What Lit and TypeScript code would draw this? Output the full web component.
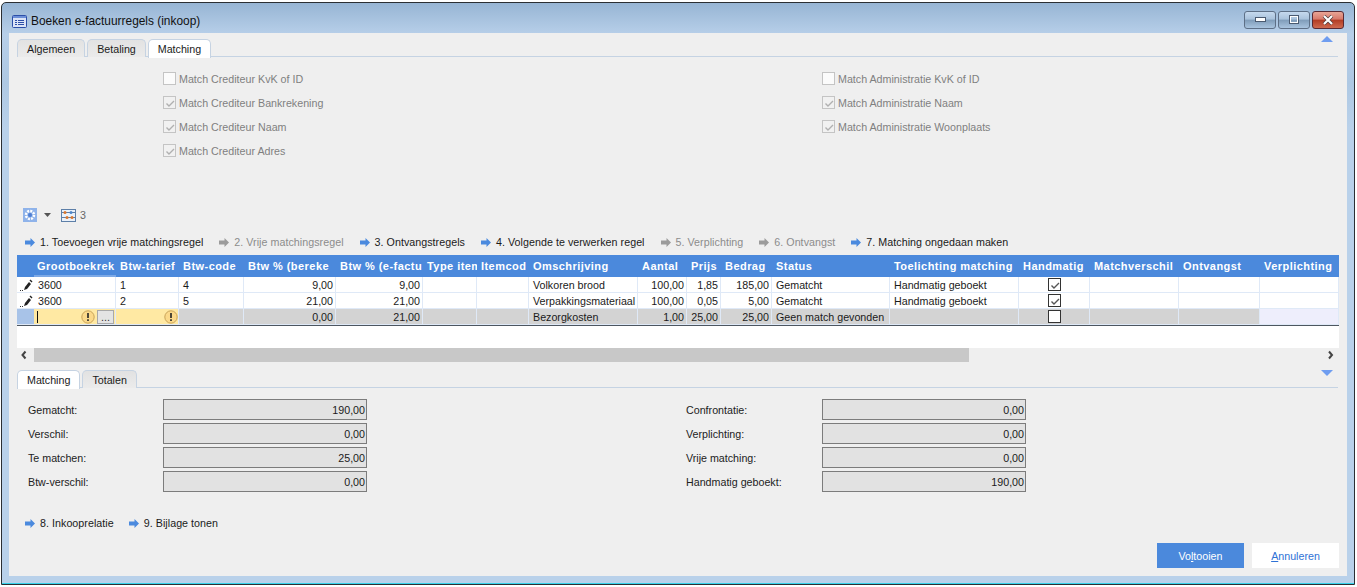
import { LitElement, css, html, svg } from 'lit'
import { customElement } from 'lit/decorators.js'

const arrow = (muted = false) => html`<svg class="arrow" width="10" height="9" viewBox="0 0 10 9">
	<path d="M0 2.500h5.500V0L10 4.500 5.500 9V6.500H0z" fill=${muted ? '#9b9b9b' : '#4b8ade'}></path>
</svg>`

const warn = html`<svg class="warn" width="14" height="14" viewBox="0 0 14 14">
	<circle cx="7" cy="7" r="6.200" fill="#fbd98a" stroke="#c9a45a"></circle>
	<path d="M6.200 3h1.600v5H6.200zM6.200 9.300h1.600V11H6.200z" fill="#222"></path>
</svg>`

const pencil = html`<svg class="pencil" width="14" height="12" viewBox="0 0 14 12">
	<path d="M1 11h1v1H1zM3 11h1v1H3z" fill="#333"></path>
	<path d="M5 11l1-3 4-5 2 2-4 5z" fill="#222"></path>
	<path d="M10.500 1.500l1-1 2 2-1 1z" fill="#222"></path>
</svg>`

const tick = svg`<path d="M2.500 6.500l2.500 2.500 5-5" fill="none" stroke="currentColor" stroke-width="1.400"></path>`

// labels as far as they fit in the column
const columns = [
	'Grootboekrek',
	'Btw-tarief',
	'Btw-code',
	'Btw % (bereke',
	'Btw % (e-factu',
	'Type item',
	'Itemcod',
	'Omschrijving',
	'Aantal',
	'Prijs',
	'Bedrag',
	'Status',
	'Toelichting matching',
	'Handmatig',
	'Matchverschil',
	'Ontvangst',
	'Verplichting',
]

const rows = [
	['3600', '1', '4', '9,00', '9,00', '', '', 'Volkoren brood', '100,00', '1,85', '185,00', 'Gematcht', 'Handmatig geboekt', 'x', '', '', ''],
	['3600', '2', '5', '21,00', '21,00', '', '', 'Verpakkingsmateriaal', '100,00', '0,05', '5,00', 'Gematcht', 'Handmatig geboekt', 'x', '', '', ''],
]
const lastRow = ['', '', '', '0,00', '21,00', '', '', 'Bezorgkosten', '1,00', '25,00', '25,00', 'Geen match gevonden', '', '', '', '', '']

const rightCols = new Set([3, 4, 8, 9, 10])

@customElement('app-root')
export class AppRoot extends LitElement {
	static styles = css`
		:host {
			display: block;
			width: 1357px;
			height: 587px;
			background: #fff;
			font-family: 'Liberation Sans', Arial, sans-serif;
			font-size: 10.7px;
			color: #1a1a1a;
			overflow: hidden;
			padding: 2px 2px 2px 1px;
			box-sizing: border-box;
		}
		* {
			box-sizing: border-box;
		}
		.window {
			height: 583px;
			display: flex;
			flex-direction: column;
			border: 1px solid #2b2f33;
			border-radius: 5px 5px 0 0;
			background: linear-gradient(#97b5d4 0, #b7cfe9 31px, #aec8e3 80px, #b9d1ea 125px, #b9d1ea 100%);
			padding: 0 7px 8px 7px;
			box-shadow: inset 0 -1px 0 #35d3ea;
		}
		.titlebar {
			height: 30px;
			flex: none;
			display: flex;
			align-items: center;
			gap: 4px;
			padding: 6px 0 0 3px;
			font-size: 11.9px;
			color: #111;
		}
		.title {
			flex: 1;
		}
		.caption {
			display: flex;
			gap: 2px;
			margin: -3px 3px 0 0;
		}
		.cap {
			width: 32px;
			height: 18px;
			border: 1px solid #5d6f86;
			border-radius: 3px;
			display: flex;
			align-items: center;
			justify-content: center;
			background: linear-gradient(#c5d9ee 0, #a9c2dc 45%, #7f9cb9 50%, #a9c4df 100%);
		}
		.cap.close {
			border-color: #5a2a33;
			background: linear-gradient(#e8a596 0, #d8796a 45%, #b23c24 50%, #cf6a50 100%);
		}
		.content {
			flex: 1;
			min-height: 0;
			background: #efefef;
			display: flex;
			flex-direction: column;
			padding: 6px 8px 8px 8px;
			position: relative;
		}
		.tabs {
			display: flex;
			height: 18px;
			flex: none;
			gap: 2px;
			border-bottom: 1px solid #c5d3e3;
			margin-right: 1px;
			position: relative;
		}
		.tab {
			height: 18px;
			padding: 0 9px;
			display: flex;
			align-items: center;
			justify-content: center;
			border: 1px solid #c6d3e2;
			border-bottom: none;
			border-radius: 5px 5px 0 0;
			background: linear-gradient(#e2e2e2, #ebebeb);
		}
		.tab.active {
			background: #fff;
			height: 19px;
		}
		.collapse {
			position: absolute;
			right: 5px;
			top: -3px;
		}
		.collapse.down {
			top: 0;
		}
		.matches {
			height: 149px;
			flex: none;
			display: flex;
			padding: 15px 0 0 146px;
		}
		.match-col {
			width: 659px;
			flex: none;
			display: flex;
			flex-direction: column;
			gap: 11px;
		}
		.match {
			height: 13px;
			display: flex;
			align-items: center;
			gap: 3px;
			color: #7f7f7f;
		}
		.box {
			width: 13px;
			height: 13px;
			border: 1px solid #c4c4c4;
			background: #f1f1f1;
			color: #b0b0b0;
			display: block;
			flex: none;
		}
		.box.plain {
			background: #fbfbfb;
		}
		.toolbar {
			height: 18px;
			flex: none;
			display: flex;
			align-items: center;
			padding-left: 6px;
			color: #666;
		}
		.caret-down {
			margin: 0 10px 0 7px;
		}
		.count {
			margin-left: 4px;
		}
		.links {
			display: flex;
			align-items: center;
			flex: none;
			gap: 16px;
			height: 16px;
			padding-left: 8px;
			letter-spacing: 0.04px;
		}
		.toolbar + .links {
			margin-top: 10px;
			margin-bottom: 5px;
		}
		.link {
			display: flex;
			align-items: center;
			gap: 5px;
		}
		.link.muted {
			color: #8c8c8c;
		}
		.grid {
			flex: none;
			background: #fff;
			height: 93px;
		}
		.row {
			display: grid;
			grid-template-columns: 17px 82px 63px 65px 92px 87px 54px 52px 109px 49px 34px 51px 118px 129px 71px 89px 81px 79px;
			height: 16px;
		}
		.row.head {
			height: 22px;
			background: #4b89dc;
			color: #fff;
			font-size: 11px;
			font-weight: bold;
			letter-spacing: 0.45px;
		}
		.cell {
			overflow: hidden;
			white-space: nowrap;
			padding: 0 2px 0 4px;
			display: flex;
			align-items: center;
			border-right: 1px solid #dfe9f7;
			border-bottom: 1px solid #dfe9f7;
		}
		.head .cell {
			border: none;
			padding: 0 0 0 4px;
		}
		.head .cell.sorted {
			padding-left: 3px;
			box-shadow: inset 0 -2px 0 #7da9e6;
		}
		.cell.right {
			justify-content: flex-end;
		}
		.cell.center {
			justify-content: center;
			padding: 0;
		}
		.rowhead {
			padding: 0;
			justify-content: center;
			border-right: none;
		}
		.row.new {
			height: 17px;
			border-bottom: 1px solid #4d5660;
		}
		.new .cell {
			background: #d3d3d3;
			height: 16px;
		}
		.new .rowhead {
			background: #a8c3e8;
		}
		.new .cell.yellow {
			background: #ffe9a3;
			padding: 0 0 0 3px;
			justify-content: space-between;
		}
		.new .cell.free {
			background: #eeeefc;
		}
		.caret {
			width: 1px;
			height: 12px;
			background: #111;
		}
		.ellipsis {
			width: 17px;
			height: 14px;
			background: #e4e4e4;
			border: 1px solid #a8a8a8;
			display: flex;
			align-items: center;
			justify-content: center;
			color: #333;
			margin-right: 1px;
			flex: none;
		}
		.warn {
			margin-left: auto;
			margin-right: 2px;
			flex: none;
		}
		.yellow .warn:only-child {
			margin-right: 0;
		}
		.check {
			width: 13px;
			height: 13px;
			border: 1px solid #333;
			background: #fff;
			color: #555;
			display: block;
		}
		.scroll {
			height: 14px;
			flex: none;
			display: flex;
			align-items: center;
			margin-bottom: 8px;
		}
		.scroll svg {
			flex: none;
		}
		.track {
			width: 1286px;
			height: 14px;
			flex: none;
		}
		.thumb {
			width: 935px;
			height: 14px;
			background: #c8c8c8;
		}
		.fields {
			flex: none;
			height: 127px;
			display: grid;
			grid-template-columns: 658px 1fr;
			padding: 11px 0 0 11px;
		}
		.field-col {
			display: flex;
			flex-direction: column;
			gap: 3px;
		}
		.field {
			display: flex;
			align-items: center;
			height: 21px;
		}
		.field label {
			width: 135px;
			color: #222;
		}
		.field-col:last-child .field label {
			width: 136px;
		}
		.value {
			width: 204px;
			height: 21px;
			border: 1px solid #7c7c7c;
			background: #e2e2e2;
			display: flex;
			align-items: center;
			justify-content: flex-end;
			padding-right: 1px;
		}
		.bottom {
			flex: 1;
			display: flex;
			flex-direction: column;
			justify-content: space-between;
		}
		.bottom .links {
			gap: 15px;
		}
		.buttons {
			display: flex;
			justify-content: flex-end;
			gap: 8px;
		}
		.btn {
			width: 87px;
			height: 25px;
			display: flex;
			align-items: center;
			justify-content: center;
			background: #4b89dc;
			color: #fff;
		}
		.btn.light {
			background: #fff;
			color: #2f72d6;
		}
		u {
			text-underline-offset: 1px;
		}
	`

	private renderCell(value: string, i: number) {
		if (i === 13) {
			return html`<div class="cell center">
				<svg class="check" viewBox="0 0 11 11">${value === 'x' ? tick : ''}</svg>
			</div>`
		}
		return html`<div class="cell ${rightCols.has(i) ? 'right' : ''}">${value}</div>`
	}

	private renderLastCell(value: string, i: number) {
		if (i === 0) {
			return html`<div class="cell yellow"><span class="caret"></span>${warn}<span class="ellipsis">...</span></div>`
		}
		if (i === 1) {
			return html`<div class="cell yellow">${warn}</div>`
		}
		if (i === 16) {
			return html`<div class="cell free"></div>`
		}
		return this.renderCell(value, i)
	}

	private renderMatch(label: string, checked: boolean) {
		return html`<div class="match">
			<svg class="box ${checked ? '' : 'plain'}" viewBox="0 0 11 11">${checked ? tick : ''}</svg>
			<span>${label}</span>
		</div>`
	}

	private renderField(label: string, value: string) {
		return html`<div class="field"><label>${label}</label><div class="value">${value}</div></div>`
	}

	render() {
		return html`
			<div class="window">
				<div class="titlebar">
					<svg width="15" height="13" viewBox="0 0 15 13">
						<rect x=".5" y=".5" width="14" height="12" rx="1" fill="#dbe4f7" stroke="#2c4fa8"></rect>
						<rect x="1" y="1" width="13" height="2" fill="#6c8fd8"></rect>
						<path d="M3 5h2v1H3zM6 5h6v1H6zM3 7h2v1H3zM6 7h6v1H6zM3 9h2v1H3zM6 9h6v1H6z" fill="#2c4fa8"></path>
					</svg>
					<span class="title">Boeken e-factuurregels (inkoop)</span>
					<div class="caption">
						<div class="cap">
							<svg width="11" height="5" viewBox="0 0 11 5"><rect x=".5" y=".5" width="10" height="4" fill="#fff" stroke="#4a5a70"></rect></svg>
						</div>
						<div class="cap">
							<svg width="10" height="9" viewBox="0 0 10 9"><rect x="1" y="1" width="8" height="7" fill="none" stroke="#fff" stroke-width="2"></rect><rect x=".5" y=".5" width="9" height="8" fill="none" stroke="#4a5a70"></rect></svg>
						</div>
						<div class="cap close">
							<svg width="12" height="10" viewBox="0 0 12 10"><path d="M2 1l8 8M10 1L2 9" stroke="#4a3a3a" stroke-width="3.500"></path><path d="M2 1l8 8M10 1L2 9" stroke="#fff" stroke-width="2.200"></path></svg>
						</div>
					</div>
				</div>
				<div class="content">
					<div class="tabs">
						<div class="tab">Algemeen</div>
						<div class="tab">Betaling</div>
						<div class="tab active">Matching</div>
						<svg class="collapse" width="12" height="6" viewBox="0 0 12 6"><path d="M6 0l6 6H0z" fill="#6f9df0"></path></svg>
					</div>
					<div class="matches">
						<div class="match-col">
							${this.renderMatch('Match Crediteur KvK of ID', false)}
							${this.renderMatch('Match Crediteur Bankrekening', true)}
							${this.renderMatch('Match Crediteur Naam', true)}
							${this.renderMatch('Match Crediteur Adres', true)}
						</div>
						<div class="match-col">
							${this.renderMatch('Match Administratie KvK of ID', false)}
							${this.renderMatch('Match Administratie Naam', true)}
							${this.renderMatch('Match Administratie Woonplaats', true)}
						</div>
					</div>
					<div class="toolbar">
						<svg width="14" height="14" viewBox="0 0 14 14">
							<rect width="14" height="14" fill="#8fb3ea"></rect>
							<circle cx="7" cy="7" r="4" fill="none" stroke="#fff" stroke-width="2.500" stroke-dasharray="2 1.100"></circle>
							<circle cx="7" cy="7" r="2" fill="#4f7fd2"></circle>
						</svg>
						<svg class="caret-down" width="7" height="4" viewBox="0 0 7 4"><path d="M0 0h7L3.500 4z" fill="#555"></path></svg>
						<svg width="15" height="14" viewBox="0 0 15 14">
							<rect x=".5" y="1.500" width="14" height="12" fill="#eaf1fa" stroke="#5d7fa8"></rect>
							<path d="M1 4.500h13M1 9.500h13" stroke="#5d7fa8"></path>
							<circle cx="4" cy="4.500" r="1.500" fill="#d9772e"></circle>
							<circle cx="10" cy="4.500" r="1.500" fill="#4f86c8"></circle>
							<circle cx="6" cy="9.500" r="1.500" fill="#d9772e"></circle>
							<circle cx="11" cy="9.500" r="1.500" fill="#d9772e"></circle>
						</svg>
						<span class="count">3</span>
					</div>
					<div class="links">
						<span class="link">${arrow()}1. Toevoegen vrije matchingsregel</span>
						<span class="link muted">${arrow(true)}2. Vrije matchingsregel</span>
						<span class="link">${arrow()}3. Ontvangstregels</span>
						<span class="link">${arrow()}4. Volgende te verwerken regel</span>
						<span class="link muted">${arrow(true)}5. Verplichting</span>
						<span class="link muted">${arrow(true)}6. Ontvangst</span>
						<span class="link">${arrow()}7. Matching ongedaan maken</span>
					</div>
					<div class="grid">
						<div class="row head">
							<div class="cell"></div>
							${columns.map((label, i) => html`<div class="cell ${i === 0 ? 'sorted' : ''}">${label}</div>`)}
						</div>
						${rows.map(
							(r) => html`<div class="row">
								<div class="cell rowhead">${pencil}</div>
								${r.map((v, i) => this.renderCell(v, i))}
							</div>`
						)}
						<div class="row new">
							<div class="cell rowhead"></div>
							${lastRow.map((v, i) => this.renderLastCell(v, i))}
						</div>
					</div>
					<div class="scroll">
						<svg width="17" height="14" viewBox="0 0 17 14"><path d="M8.500 3.500L5.500 7l3 3.500" fill="none" stroke="#444" stroke-width="2"></path></svg>
						<div class="track"><div class="thumb"></div></div>
						<svg width="19" height="14" viewBox="0 0 19 14"><path d="M9 3.500l3 3.500-3 3.500" fill="none" stroke="#444" stroke-width="2"></path></svg>
					</div>
					<div class="tabs">
						<div class="tab active">Matching</div>
						<div class="tab">Totalen</div>
						<svg class="collapse down" width="12" height="6" viewBox="0 0 12 6"><path d="M0 0h12L6 6z" fill="#6f9df0"></path></svg>
					</div>
					<div class="fields">
						<div class="field-col">
							${this.renderField('Gematcht:', '190,00')}
							${this.renderField('Verschil:', '0,00')}
							${this.renderField('Te matchen:', '25,00')}
							${this.renderField('Btw-verschil:', '0,00')}
						</div>
						<div class="field-col">
							${this.renderField('Confrontatie:', '0,00')}
							${this.renderField('Verplichting:', '0,00')}
							${this.renderField('Vrije matching:', '0,00')}
							${this.renderField('Handmatig geboekt:', '190,00')}
						</div>
					</div>
					<div class="bottom">
						<div class="links">
							<span class="link">${arrow()}8. Inkooprelatie</span>
							<span class="link">${arrow()}9. Bijlage tonen</span>
						</div>
						<div class="buttons">
							<div class="btn">Vo<u>l</u>tooien</div>
							<div class="btn light"><u>A</u>nnuleren</div>
						</div>
					</div>
				</div>
			</div>
		`
	}
}
